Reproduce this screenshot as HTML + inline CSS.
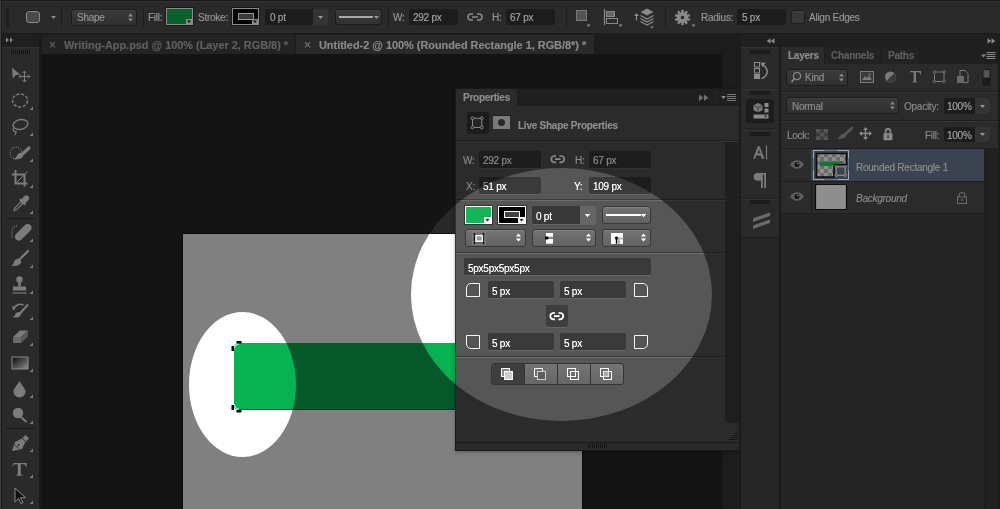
<!DOCTYPE html>
<html><head><meta charset="utf-8">
<style>
*{margin:0;padding:0;box-sizing:border-box}
html,body{width:1000px;height:509px;overflow:hidden;background:#161616;font-family:"Liberation Sans",sans-serif;font-size:11px;color:#8a8a8a}
.a{position:absolute}
.t{position:absolute;white-space:nowrap;line-height:12px;-webkit-text-stroke:0.15px currentColor}
.b{font-weight:bold}
.fld{position:absolute;background:#1d1d1d;border-radius:2px;box-shadow:0 1px 0 #333}
.dd{position:absolute;background:linear-gradient(#3a3a3a,#313131);border:1px solid #1c1c1c;border-radius:3px;box-shadow:inset 0 1px 0 #404040}
.sep{position:absolute;background:#1e1e1e}
</style></head><body>

<!-- OPTIONS BAR -->
<div class="a" style="left:0;top:0;width:1000px;height:34px;background:#2a2a2a;border-top:1px solid #1a1a1a;border-bottom:1px solid #1c1c1c"></div>
<div class="a" style="left:0;top:1px;width:1000px;height:1px;background:#303030"></div>
<div class="a" style="left:6px;top:8px;width:3px;height:19px;background:repeating-linear-gradient(#141414 0 1px,transparent 1px 2px)"></div>
<div class="a" style="left:26px;top:11px;width:14px;height:12px;border:1px solid #8a8a8a;border-radius:3px;background:#4a4a4a;box-shadow:0 -1px 0 #1a1a1a"></div>
<svg class="a" style="left:50px;top:15px" width="7" height="5"><path d="M1 1h5l-2.5 3z" fill="#8a8a8a"/></svg>
<div class="sep" style="left:61px;top:6px;width:1px;height:22px"></div>
<div class="dd" style="left:71px;top:9px;width:66px;height:17px"></div>
<div class="t" style="left:77px;top:12px;font-size:10px;letter-spacing:-0.25px;color:#969696">Shape</div>
<svg class="a" style="left:127px;top:12px" width="7" height="11"><path d="M1 4.5h5l-2.5-3zM1 6.5h5l-2.5 3z" fill="#8a8a8a"/></svg>
<div class="sep" style="left:143px;top:6px;width:1px;height:22px"></div>
<div class="t" style="left:148px;top:12px;font-size:10px;letter-spacing:-0.25px;color:#969696">Fill:</div>
<div class="a" style="left:166px;top:8px;width:27px;height:17px;background:#0a5f2a;border:1px solid #8a8a8a;box-shadow:0 0 0 1px #1a1a1a"></div>
<svg class="a" style="left:186px;top:19px" width="6" height="5"><rect width="6" height="5" fill="#8a8a8a"/><path d="M1 1.5h4l-2 2.5z" fill="#111"/></svg>
<div class="t" style="left:198px;top:12px;font-size:10px;letter-spacing:-0.25px;color:#969696">Stroke:</div>
<div class="a" style="left:232px;top:8px;width:27px;height:17px;background:#000;border:1px solid #8a8a8a;box-shadow:0 0 0 1px #1a1a1a"></div>
<div class="a" style="left:238px;top:13px;width:16px;height:7px;border:1px solid #9a9a9a;background:#3a3a3a"></div>
<svg class="a" style="left:252px;top:19px" width="6" height="5"><rect width="6" height="5" fill="#8a8a8a"/><path d="M1 1.5h4l-2 2.5z" fill="#111"/></svg>
<div class="a" style="left:265px;top:9px;width:63px;height:16px;background:#1c1c1c;border-radius:2px"></div>
<div class="a" style="left:313px;top:9px;width:15px;height:16px;background:#343434;border-radius:0 2px 2px 0"></div>
<svg class="a" style="left:317px;top:15px" width="7" height="5"><path d="M1 1h5l-2.5 3z" fill="#999"/></svg>
<div class="t" style="left:270px;top:12px;font-size:10px;letter-spacing:-0.25px;color:#a4a4a4">0 pt</div>
<div class="dd" style="left:335px;top:9px;width:47px;height:16px"></div>
<div class="a" style="left:339px;top:16px;width:34px;height:2px;background:#a8a8a8"></div>
<svg class="a" style="left:373px;top:15px" width="7" height="5"><path d="M1 1h5l-2.5 3z" fill="#999"/></svg>
<div class="sep" style="left:388px;top:6px;width:1px;height:22px"></div>
<div class="t" style="left:393px;top:12px;font-size:10px;letter-spacing:-0.25px;color:#969696">W:</div>
<div class="a" style="left:409px;top:9px;width:49px;height:16px;background:#1c1c1c;border-radius:2px"></div>
<div class="t" style="left:413px;top:12px;font-size:10px;letter-spacing:-0.25px;color:#a4a4a4">292 px</div>
<svg class="a" style="left:467px;top:12px" width="16" height="10"><path d="M6 2H4a3 3 0 0 0 0 6h2M10 2h2a3 3 0 0 1 0 6h-2M5 5h6" fill="none" stroke="#8a8a8a" stroke-width="1.6"/></svg>
<div class="t" style="left:492px;top:12px;font-size:10px;letter-spacing:-0.25px;color:#969696">H:</div>
<div class="a" style="left:506px;top:9px;width:49px;height:16px;background:#1c1c1c;border-radius:2px"></div>
<div class="t" style="left:510px;top:12px;font-size:10px;letter-spacing:-0.25px;color:#a4a4a4">67 px</div>
<div class="sep" style="left:566px;top:6px;width:1px;height:22px"></div>
<div class="a" style="left:576px;top:10px;width:11px;height:11px;border:1px solid #777;background:#555"></div>
<svg class="a" style="left:586px;top:24px" width="5" height="4"><path d="M0.5 0.5h4l-2 2.5z" fill="#8a8a8a"/></svg>
<svg class="a" style="left:603px;top:8px" width="16" height="18"><path d="M1.5 1v16" stroke="#8a8a8a" stroke-width="1.2"/><rect x="3.5" y="3.5" width="8" height="5" fill="#666" stroke="#8a8a8a"/><rect x="3.5" y="10.5" width="11" height="5" fill="#2a2a2a" stroke="#8a8a8a"/></svg>
<svg class="a" style="left:618px;top:24px" width="5" height="4"><path d="M0.5 0.5h4l-2 2.5z" fill="#8a8a8a"/></svg>
<svg class="a" style="left:633px;top:7px" width="22" height="23"><path d="M14 1.5l6.5 3.5-6.5 3.5-6.5-3.5z" fill="#8a8a8a"/><path d="M7.5 8.5l6.5 3.5 6.5-3.5M7.5 11.5l6.5 3.5 6.5-3.5M7.5 14.5l6.5 3.5 6.5-3.5" fill="none" stroke="#8a8a8a" stroke-width="1.4"/><path d="M3.5 13.5V8" stroke="#8a8a8a" stroke-width="1.2"/><path d="M1 9l2.5-3 2.5 3z" fill="#8a8a8a"/><path d="M17 19.5h4l-2 2z" fill="#8a8a8a"/></svg>
<div class="sep" style="left:665px;top:6px;width:1px;height:22px"></div>
<svg class="a" style="left:674px;top:9px" width="17" height="17"><g fill="#8a8a8a"><circle cx="8.5" cy="8.5" r="5.6"/><rect x="7.3" y="0.8" width="2.4" height="3.5" transform="rotate(0 8.5 8.5)"/><rect x="7.3" y="0.8" width="2.4" height="3.5" transform="rotate(36 8.5 8.5)"/><rect x="7.3" y="0.8" width="2.4" height="3.5" transform="rotate(72 8.5 8.5)"/><rect x="7.3" y="0.8" width="2.4" height="3.5" transform="rotate(108 8.5 8.5)"/><rect x="7.3" y="0.8" width="2.4" height="3.5" transform="rotate(144 8.5 8.5)"/><rect x="7.3" y="0.8" width="2.4" height="3.5" transform="rotate(180 8.5 8.5)"/><rect x="7.3" y="0.8" width="2.4" height="3.5" transform="rotate(216 8.5 8.5)"/><rect x="7.3" y="0.8" width="2.4" height="3.5" transform="rotate(252 8.5 8.5)"/><rect x="7.3" y="0.8" width="2.4" height="3.5" transform="rotate(288 8.5 8.5)"/><rect x="7.3" y="0.8" width="2.4" height="3.5" transform="rotate(324 8.5 8.5)"/></g><circle cx="8.5" cy="8.5" r="1.8" fill="#2a2a2a"/></svg>
<svg class="a" style="left:691px;top:24px" width="5" height="4"><path d="M0.5 0.5h4l-2 2.5z" fill="#8a8a8a"/></svg>
<div class="t" style="left:701px;top:12px;font-size:10px;letter-spacing:-0.25px;color:#969696">Radius:</div>
<div class="a" style="left:737px;top:9px;width:49px;height:16px;background:#1c1c1c;border-radius:2px"></div>
<div class="t" style="left:742px;top:12px;font-size:10px;letter-spacing:-0.25px;color:#a4a4a4">5 px</div>
<div class="a" style="left:791px;top:10px;width:14px;height:14px;background:#383838;border:1px solid #1c1c1c;border-radius:3px;box-shadow:inset 0 1px 0 #444"></div>
<div class="t" style="left:809px;top:12px;font-size:10px;letter-spacing:-0.25px;color:#969696">Align Edges</div>

<!-- TABS ROW -->
<div class="a" style="left:0;top:34px;width:1000px;height:20px;background:#1c1c1c"></div>
<div class="a" style="left:42px;top:35px;width:253px;height:19px;background:#232323"></div>
<div class="a" style="left:296px;top:35px;width:298px;height:19px;background:#292929"></div>
<div class="t" style="left:49px;top:39px;font-size:12px;color:#6a6a6a">×</div>
<div class="t b" style="left:64px;top:39px;font-size:10.9px;color:#606060">Writing-App.psd @ 100% (Layer 2, RGB/8) *</div>
<div class="t" style="left:304px;top:39px;font-size:12px;color:#7a7a7a">×</div>
<div class="t b" style="left:319px;top:39px;font-size:10.9px;color:#8a8a8a">Untitled-2 @ 100% (Rounded Rectangle 1, RGB/8*) *</div>

<!-- LEFT TOOLBAR -->
<div class="a" style="left:1px;top:34px;width:1px;height:475px;background:#1a1a1a"></div>
<div class="a" style="left:2px;top:35px;width:37px;height:12px;background:#1f1f1f"></div>
<div class="a" style="left:2px;top:47px;width:37px;height:462px;background:#2a2a2a;border-top:1px solid #333"></div>
<div class="a" style="left:39px;top:34px;width:2px;height:475px;background:#1a1a1a"></div>
<svg class="a" style="left:0;top:0" width="40" height="509">
<g fill="#8a8a8a" stroke="none">
<path d="M6 37.5l3 2.5-3 2.5zM10 37.5l3 2.5-3 2.5z"/>
</g>
<g stroke="#141414" stroke-width="1"><path d="M11.5 50v4.5M13.5 50v4.5M15.5 50v4.5M17.5 50v4.5M19.5 50v4.5M21.5 50v4.5M23.5 50v4.5M25.5 50v4.5M27.5 50v4.5M29.5 50v4.5"/></g>
<g fill="#7c7c7c" stroke="none">
<!-- tiny triangles -->
<path d="M33 106.5v3.5h-3.5zM33 132.5v3.5h-3.5zM33 158.5v3.5h-3.5zM33 184.5v3.5h-3.5zM33 210.5v3.5h-3.5zM33 238.5v3.5h-3.5zM33 264.5v3.5h-3.5zM33 290.5v3.5h-3.5zM33 316.5v3.5h-3.5zM33 342.5v3.5h-3.5zM33 368.5v3.5h-3.5zM33 394.5v3.5h-3.5zM33 420.5v3.5h-3.5zM33 448.5v3.5h-3.5zM33 474.5v3.5h-3.5zM33 500.5v3.5h-3.5z"/>
<!-- move -->
<path d="M12 67.5l8 7-4.2.4-3 3.8z"/>
</g>
<g stroke="#7c7c7c" fill="none">
<path d="M24.5 71.5v10M19.5 76.5h10" stroke-width="1.2"/>
<path d="M22.5 73l2-2 2 2M22.5 80l2 2 2-2M21 74.5l-2 2 2 2M28 74.5l2 2-2 2" stroke-width="1"/>
<!-- marquee -->
<ellipse cx="20" cy="100.5" rx="7.5" ry="6.5" stroke-width="1.5" stroke-dasharray="3.2 1.6"/>
<!-- lasso -->
<ellipse cx="20.5" cy="124.5" rx="7.5" ry="4.8" stroke-width="1.4" transform="rotate(-12 20.5 124.5)"/>
<path d="M14 128c-2 2 0 4 1.5 3.5s0 3-1 3.5" stroke-width="1.3"/>
<!-- quick select -->
<circle cx="16" cy="153" r="5.8" stroke-width="1.2" stroke-dasharray="1 1.2"/>
<path d="M29 148l-7 6.5" stroke-width="3.2" stroke-linecap="round"/>
<!-- crop -->
<path d="M15.5 170v13.5h12M12 174.5h12.5v12" stroke-width="2"/>
<path d="M15.5 183.5l12-12" stroke-width="1"/>
<!-- eyedropper -->

<!-- healing dotted -->
<path d="M17 226a5 5 0 0 0-5 6v6" stroke-width="1.3" stroke-dasharray="1 1.3"/>
<!-- brush -->
<path d="M28 251l-9 9" stroke-width="2.2" stroke-linecap="round"/>
<!-- stamp -->
<path d="M12.5 293h14" stroke-width="1.2"/>
<!-- history brush -->
<path d="M13.5 310a7 7 0 0 1 10-5" stroke-width="1.5"/>
<path d="M27.5 305l-7 8" stroke-width="2" stroke-linecap="round"/>
<!-- gradient border -->
<!-- pen -->
<!-- path select -->
</g>
<defs><linearGradient id="gr" x1="0" y1="0" x2="1" y2="1"><stop offset="0" stop-color="#0a0a0a"/><stop offset="1" stop-color="#8a8a8a"/></linearGradient></defs>
<g fill="#7c7c7c" stroke="none">
<!-- quick select brush tip -->
<path d="M23 153c-3-1-6 1-6.5 3.5-.5 1.5-2 2-3 2.5 3 .5 8 .5 9.5-2.5z"/>
<!-- crop -->
<!-- eyedropper -->
<g transform="translate(20.5 204) rotate(45)"><rect x="-2.8" y="-11" width="5.6" height="7.5" rx="2.6"/><rect x="-3.8" y="-4.2" width="7.6" height="2.4"/><rect x="-1.3" y="-1.8" width="2.6" height="9.5" fill="#3a3a3a" stroke="#7c7c7c" stroke-width="1"/><path d="M-.6 7.7h1.2v2.5h-1.2z"/></g>
<!-- healing -->
<path d="M16 234l9-9c1.5-1.5 4-1.5 5.5 0s1.5 4 0 5.5l-9 9c-1.5 1.5-4 1.5-5.5 0s-1.5-4 0-5.5z"/>
<!-- brush tip -->
<path d="M19.5 258.5c-3 0-5 1.5-5.5 3.5-.3 1.5-1.5 3-3 3.5 4 .8 9 .5 10.5-3.5z"/>
<!-- stamp -->
<circle cx="19.5" cy="279.5" r="3.2"/>
<path d="M18.2 282h2.6v4.5h-2.6z"/>
<path d="M13 286.5h13v4h-13z"/>
<!-- history brush tip -->
<path d="M19.5 312c-2.5 0-4 1-4.5 2.8-.2 1-1.2 2-2.5 2.5 3.5.6 7.5.3 8.5-2.8z"/>
<path d="M12 306l3.5 1-2.5 3z"/>
<!-- eraser -->
<path d="M13 337l7-6.5h8l-7 6.5z"/>
<path d="M13 337h8v6h-8z" fill="#6a6a6a"/>
<path d="M21 337l7-6.5v6l-7 6.5z" fill="#5a5a5a"/>
<!-- blur drop -->
<path d="M19.5 381c2 4 6 7.5 6 10.5a6 6 0 0 1-12 0c0-3 4-6.5 6-10.5z"/>
<!-- dodge -->
<circle cx="18" cy="413" r="5.2"/>
<path d="M21 417l5.5 5" stroke="#7c7c7c" stroke-width="2"/>
<!-- pen -->
<path d="M12 451l3-9 7-3.5 3.5 3.5-3.5 7z"/>
<path d="M22.5 438l3-3 3.5 3.5-3 3z"/>
<!-- T -->
<path d="M13.5 463h13.2v4h-.8c-.3-2-.8-2.8-2.5-2.8h-2.6v10.3l1.5.5v.8h-6v-.8l1.5-.5v-10.3h-2.6c-1.7 0-2.2.8-2.5 2.8h-.7z"/>
</g>
<path d="M14.5 444.5l4 4" stroke="#2a2a2a" stroke-width="1"/><circle cx="18.5" cy="445" r="1" fill="#2a2a2a"/>
<rect x="12" y="357" width="16" height="12" fill="url(#gr)" stroke="#8a8a8a" stroke-width="1"/>
<path d="M15 488v14l3.5-3.5 2.5 5 2-1-2.5-4.8h5z" fill="#0e0e0e" stroke="#8a8a8a" stroke-width="1"/>
<path d="M6 218.5h29M6 428.5h29" stroke="#1a1a1a" stroke-width="1"/>
</svg>

<!-- CANVAS DOC -->
<div class="a" style="left:41px;top:54px;width:698px;height:455px;background:#141414"></div>
<div class="a" style="left:722px;top:54px;width:17px;height:455px;background:linear-gradient(90deg,#1a1a1a,#1e1e1e 40%,#1c1c1c)"></div>
<div class="a" style="left:183px;top:234px;width:399px;height:275px;background:#808080;box-shadow:0 0 0 1px #0a0a0a"></div>
<div class="a" style="left:234px;top:343px;width:292px;height:67px;background:#045829;border-radius:5px 3px 3px 5px;box-shadow:inset 0 -1px 0 #02301a"></div>
<svg class="a" style="left:225px;top:335px" width="20" height="85">
<path d="M9.5 13.5A4.5 4.5 0 0 1 14 9" stroke="#40d888" stroke-width="1" fill="none"/>
<path d="M9.5 69.5A4.5 4.5 0 0 0 14 74" stroke="#40d888" stroke-width="1" fill="none"/>
<rect x="11.5" y="6" width="5" height="2.5" fill="#000"/>
<rect x="6.5" y="11" width="2.5" height="5" fill="#000"/>
<rect x="6.5" y="70" width="2.5" height="5" fill="#000"/>
<rect x="11.5" y="75" width="5" height="2.5" fill="#000"/>
</svg>

<!-- PROPERTIES PANEL -->
<div class="a" style="left:455px;top:88px;width:286px;height:363px;background:#2b2b2b;border:1px solid #191919;box-shadow:0 1px 4px rgba(0,0,0,.3)"></div>
<div class="a" style="left:456px;top:89px;width:284px;height:17px;background:#1f1f1f"></div>
<div class="a" style="left:456px;top:89px;width:61px;height:18px;background:#2b2b2b"></div>
<div class="t b" style="left:463px;top:92px;font-size:10px;letter-spacing:-0.25px;color:#8e8e8e">Properties</div>
<svg class="a" style="left:698px;top:91px" width="40" height="13">
<path d="M1 3.5l4.5 3.3L1 10zM6 3.5l4.5 3.3L6 10z" fill="#6e6e6e"/>
<path d="M16.5 0v12M19 0v12" stroke="#2a2a2a" stroke-width="1"/>
<path d="M23 5h5l-2.5 3z" fill="#8a8a8a"/>
<path d="M29 3.5h9M29 5.5h9M29 7.5h9M29 9.5h9" stroke="#777" stroke-width="1"/>
</svg>
<div class="a" style="left:467px;top:112px;width:22px;height:22px;background:#1c1c1c;border-radius:3px"></div>
<svg class="a" style="left:467px;top:112px" width="22" height="22"><rect x="5.5" y="6.2" width="9.3" height="9.3" fill="#242424" stroke="#8a8a8a" stroke-width="1"/><g fill="#1c1c1c" stroke="#8a8a8a" stroke-width="1"><circle cx="5.5" cy="6.2" r="1.4"/><circle cx="14.8" cy="6.2" r="1.4"/><circle cx="5.5" cy="15.5" r="1.4"/><circle cx="14.8" cy="15.5" r="1.4"/></g></svg>
<div class="a" style="left:493px;top:116px;width:17px;height:13px;background:#7a7a7a;box-shadow:0 -1px 0 #1e1e1e"></div>
<div class="a" style="left:498px;top:119px;width:7px;height:7px;border-radius:50%;background:#2a2a2a"></div>
<div class="t b" style="left:518px;top:120px;font-size:10px;letter-spacing:-0.25px;color:#8e8e8e">Live Shape Properties</div>
<div class="a" style="left:456px;top:140px;width:284px;height:1px;background:#1e1e1e"></div>
<div class="a" style="left:456px;top:141px;width:284px;height:1px;background:#353535"></div>
<div class="a" style="left:725px;top:142px;width:15px;height:281px;background:#1f1f1f"></div>

<div class="t" style="left:463px;top:155px;font-size:10px;letter-spacing:-0.25px;color:#8a8a8a">W:</div>
<div class="fld" style="left:479px;top:151px;width:62px;height:17px"></div>
<div class="t" style="left:483px;top:155px;font-size:10px;letter-spacing:-0.25px;color:#8e8e8e">292 px</div>
<svg class="a" style="left:550px;top:154px" width="16" height="11"><path d="M6 2H4.5a3.2 3.2 0 0 0 0 6.4H6M9.5 2H11a3.2 3.2 0 0 1 0 6.4H9.5M5 5.2h5.5" fill="none" stroke="#8a8a8a" stroke-width="1.7"/></svg>
<div class="t" style="left:575px;top:155px;font-size:10px;letter-spacing:-0.25px;color:#8a8a8a">H:</div>
<div class="fld" style="left:589px;top:151px;width:62px;height:17px"></div>
<div class="t" style="left:593px;top:155px;font-size:10px;letter-spacing:-0.25px;color:#8e8e8e">67 px</div>

<div class="t" style="left:466px;top:181px;font-size:10px;letter-spacing:-0.25px;color:#8a8a8a">X:</div>
<div class="fld" style="left:479px;top:177px;width:62px;height:17px"></div>
<div class="t" style="left:483px;top:181px;font-size:10px;letter-spacing:-0.25px;color:#8e8e8e">51 px</div>
<div class="t" style="left:574px;top:181px;font-size:10px;letter-spacing:-0.25px;color:#8a8a8a">Y:</div>
<div class="fld" style="left:589px;top:177px;width:62px;height:17px"></div>
<div class="t" style="left:593px;top:181px;font-size:10px;letter-spacing:-0.25px;color:#8e8e8e">109 px</div>

<div class="a" style="left:456px;top:199px;width:269px;height:1px;background:#1e1e1e"></div>
<div class="a" style="left:456px;top:200px;width:269px;height:1px;background:#353535"></div>

<div class="a" style="left:465px;top:206px;width:27px;height:18px;background:#0a5a2a;border:1px solid #8a8a8a;box-shadow:0 0 0 1px #1a1a1a"></div>
<svg class="a" style="left:484px;top:217px" width="7" height="6"><rect width="7" height="6" fill="#7a7a7a"/><path d="M1.5 2h4l-2 2.5z" fill="#111"/></svg>
<div class="a" style="left:498px;top:206px;width:28px;height:18px;background:#000;border:1px solid #8a8a8a;box-shadow:0 0 0 1px #1a1a1a"></div>
<div class="a" style="left:504px;top:211px;width:16px;height:7px;border:1px solid #8a8a8a;background:#222"></div>
<svg class="a" style="left:518px;top:217px" width="7" height="6"><rect width="7" height="6" fill="#7a7a7a"/><path d="M1.5 2h4l-2 2.5z" fill="#111"/></svg>
<div class="a" style="left:532px;top:206px;width:64px;height:18px;background:#1c1c1c;border-radius:2px;box-shadow:0 1px 0 #333"></div>
<div class="a" style="left:580px;top:206px;width:16px;height:18px;background:#333;border-radius:0 2px 2px 0"></div>
<svg class="a" style="left:584px;top:213px" width="7" height="5"><path d="M1 1h5l-2.5 3z" fill="#999"/></svg>
<div class="t" style="left:536px;top:211px;font-size:10px;letter-spacing:-0.25px;color:#8e8e8e">0 pt</div>
<div class="dd" style="left:602px;top:206px;width:49px;height:18px"></div>
<div class="a" style="left:606px;top:214px;width:35px;height:2px;background:#9a9a9a"></div>
<svg class="a" style="left:640px;top:213px" width="7" height="5"><path d="M1 1h5l-2.5 3z" fill="#999"/></svg>

<div class="dd" style="left:465px;top:229px;width:61px;height:18px"></div>

<svg class="a" style="left:515px;top:232px" width="7" height="11"><path d="M1 4.5h5l-2.5-3zM1 6.5h5l-2.5 3z" fill="#8a8a8a"/></svg>
<div class="dd" style="left:532px;top:229px;width:64px;height:18px"></div>

<svg class="a" style="left:585px;top:232px" width="7" height="11"><path d="M1 4.5h5l-2.5-3zM1 6.5h5l-2.5 3z" fill="#8a8a8a"/></svg>
<div class="dd" style="left:602px;top:229px;width:49px;height:18px"></div>
<svg class="a" style="left:464px;top:228px" width="160" height="20">
<rect x="8.5" y="3.5" width="13" height="13" fill="none" stroke="#3e3e3e" stroke-width="1"/>
<path d="M10.4 5.9v9M19.5 5.9v9" stroke="#000" stroke-width="1"/>
<rect x="12" y="7.6" width="6.4" height="5.6" fill="#4a4a4a" stroke="#808080" stroke-width="1.4"/>
<g fill="#000" stroke="#555" stroke-width=".6"><circle cx="10.4" cy="5.9" r="1.5"/><circle cx="19.5" cy="5.9" r="1.5"/><circle cx="10.4" cy="14.9" r="1.5"/><circle cx="19.5" cy="14.9" r="1.5"/></g>
<rect x="82" y="5" width="7" height="3.8" fill="#808080"/><rect x="82" y="11" width="7" height="4.7" fill="#808080"/><path d="M84 10h5" stroke="#555" stroke-width="1"/>
<rect x="81" y="8.6" width="3.2" height="2.8" fill="#000"/>
<rect x="147" y="5" width="12" height="11" fill="#808080"/><path d="M151.5 9.5h7.5v2h-3v4.5h-4.5z" fill="#5a5a5a"/>
<circle cx="152.5" cy="10" r="1.6" fill="#000"/><path d="M152.5 10v5.5" stroke="#000" stroke-width="1.1"/>
</svg>
<svg class="a" style="left:640px;top:232px" width="7" height="11"><path d="M1 4.5h5l-2.5-3zM1 6.5h5l-2.5 3z" fill="#8a8a8a"/></svg>

<div class="a" style="left:456px;top:252px;width:269px;height:1px;background:#1e1e1e"></div>
<div class="a" style="left:456px;top:253px;width:269px;height:1px;background:#353535"></div>

<div class="fld" style="left:464px;top:258px;width:187px;height:17px"></div>
<div class="t" style="left:468px;top:263px;font-size:10px;letter-spacing:-0.25px;color:#8e8e8e">5px5px5px5px</div>

<svg class="a" style="left:465px;top:282px" width="16" height="16"><path d="M1.5 14.5V6a4.5 4.5 0 0 1 4.5-4.5h8.5v13z" fill="#2a2a2a" stroke="#7a7a7a" stroke-width="1"/></svg>
<div class="fld" style="left:488px;top:281px;width:66px;height:17px"></div>
<div class="t" style="left:492px;top:286px;font-size:10px;letter-spacing:-0.25px;color:#8e8e8e">5 px</div>
<div class="fld" style="left:560px;top:281px;width:66px;height:17px"></div>
<div class="t" style="left:564px;top:286px;font-size:10px;letter-spacing:-0.25px;color:#8e8e8e">5 px</div>
<svg class="a" style="left:633px;top:282px" width="16" height="16"><path d="M1.5 1.5H10a4.5 4.5 0 0 1 4.5 4.5v8.5h-13z" fill="#2a2a2a" stroke="#7a7a7a" stroke-width="1"/></svg>

<div class="a" style="left:546px;top:305px;width:22px;height:22px;background:#1f1f1f;border-radius:2px;box-shadow:0 1px 0 #333"></div>
<svg class="a" style="left:549px;top:311px" width="16" height="11"><path d="M6 2H4.5a3.2 3.2 0 0 0 0 6.4H6M9.5 2H11a3.2 3.2 0 0 1 0 6.4H9.5M5 5.2h5.5" fill="none" stroke="#8a8a8a" stroke-width="1.7"/></svg>

<svg class="a" style="left:465px;top:334px" width="16" height="16"><path d="M1.5 1.5h13v13H6a4.5 4.5 0 0 1-4.5-4.5z" fill="#2a2a2a" stroke="#7a7a7a" stroke-width="1"/></svg>
<div class="fld" style="left:488px;top:333px;width:66px;height:17px"></div>
<div class="t" style="left:492px;top:338px;font-size:10px;letter-spacing:-0.25px;color:#8e8e8e">5 px</div>
<div class="fld" style="left:560px;top:333px;width:66px;height:17px"></div>
<div class="t" style="left:564px;top:338px;font-size:10px;letter-spacing:-0.25px;color:#8e8e8e">5 px</div>
<svg class="a" style="left:633px;top:334px" width="16" height="16"><path d="M1.5 1.5h13V10a4.5 4.5 0 0 1-4.5 4.5H1.5z" fill="#2a2a2a" stroke="#7a7a7a" stroke-width="1"/></svg>

<div class="a" style="left:456px;top:356px;width:269px;height:1px;background:#1e1e1e"></div>
<div class="a" style="left:456px;top:357px;width:269px;height:1px;background:#353535"></div>

<div class="a" style="left:491px;top:363px;width:133px;height:22px;background:linear-gradient(#3a3a3a,#333);border:1px solid #1a1a1a;border-radius:3px"></div>
<div class="a" style="left:492px;top:364px;width:32px;height:20px;background:#1f1f1f;border-radius:2px 0 0 2px"></div>
<div class="a" style="left:524px;top:364px;width:1px;height:20px;background:#1a1a1a"></div>
<div class="a" style="left:557px;top:364px;width:1px;height:20px;background:#1a1a1a"></div>
<div class="a" style="left:590px;top:364px;width:1px;height:20px;background:#1a1a1a"></div>
<svg class="a" style="left:491px;top:363px" width="132" height="22">
<g stroke="#8a8a8a" stroke-width="1" fill="none">
<rect x="10.5" y="5.5" width="8" height="8" fill="#444"/><rect x="13.5" y="8.5" width="8" height="8" fill="#666"/>
<rect x="43.5" y="5.5" width="8" height="8"/><rect x="46.5" y="8.5" width="8" height="8" fill="#2e2e2e" stroke="#666"/>
<rect x="76.5" y="5.5" width="8" height="8"/><rect x="79.5" y="8.5" width="8" height="8"/>
<rect x="109.5" y="5.5" width="8" height="8"/><rect x="112.5" y="8.5" width="8" height="8"/><rect x="112.5" y="8.5" width="5" height="5" fill="#555" stroke="none"/>
</g>
</svg>

<div class="a" style="left:456px;top:442px;width:284px;height:1px;background:#1a1a1a"></div>
<div class="a" style="left:456px;top:443px;width:284px;height:7px;background:#2a2a2a"></div>
<div class="a" style="left:588px;top:444px;width:20px;height:4px;background:repeating-linear-gradient(90deg,#141414 0 1px,transparent 1px 2px)"></div>
<svg class="a" style="left:727px;top:430px" width="12" height="11"><path d="M11 1.5h-1M11 3.5h-3M11 5.5h-5M11 7.5h-7M11 9.5h-9" stroke="#151515" stroke-width="1"/></svg>


<!-- RIGHT DOCK -->
<div class="a" style="left:739px;top:34px;width:261px;height:475px;background:#1b1b1b"></div>
<div class="a" style="left:741px;top:35px;width:259px;height:12px;background:#1f1f1f"></div>
<svg class="a" style="left:741px;top:35px" width="259" height="12">
<path d="M29.5 3.3l-3.8 2.7 3.8 2.7zM33.5 3.3l-3.8 2.7 3.8 2.7z" fill="#8a8a8a"/>
<path d="M246.5 3.3l3.8 2.7-3.8 2.7zM250.5 3.3l3.8 2.7-3.8 2.7z" fill="#8a8a8a"/>
</svg>
<div class="a" style="left:741px;top:47px;width:38px;height:462px;background:#262626"></div>
<div class="a" style="left:741px;top:47px;width:38px;height:40px;background:#2a2a2a;border-top:1px solid #333"></div>
<div class="a" style="left:741px;top:89px;width:38px;height:39px;background:#2a2a2a;border-top:1px solid #333"></div>
<div class="a" style="left:741px;top:130px;width:38px;height:67px;background:#2a2a2a;border-top:1px solid #333"></div>
<div class="a" style="left:741px;top:199px;width:38px;height:38px;background:#2a2a2a;border-top:1px solid #333"></div>
<div class="a" style="left:741px;top:237px;width:38px;height:1px;background:#1c1c1c"></div>
<div class="a" style="left:750px;top:50px;width:20px;height:4px;background:#1c1c1c"></div>
<div class="a" style="left:750px;top:91px;width:20px;height:4px;background:#1c1c1c"></div>
<div class="a" style="left:750px;top:132px;width:20px;height:4px;background:#1c1c1c"></div>
<div class="a" style="left:750px;top:200px;width:20px;height:4px;background:#1c1c1c"></div>
<div class="a" style="left:746px;top:99px;width:28px;height:24px;background:#1c1c1c;border-radius:3px"></div>
<svg class="a" style="left:741px;top:47px" width="38" height="200">
<g fill="none" stroke="#8a8a8a" stroke-width="1">
<rect x="13.5" y="15.5" width="5" height="4.5"/><rect x="13.5" y="21.5" width="5" height="4.5"/>
</g>
<rect x="13" y="27" width="6" height="5" fill="#8a8a8a"/>
<path d="M20.5 31.5c3.5-1 6.5-4.5 5.5-8.5-.5-2.2-2-3.8-3.5-4.5" fill="none" stroke="#8a8a8a" stroke-width="1.5"/>
<path d="M19.5 15.5l5.5.3-3.8 4.2z" fill="#8a8a8a"/>
<!-- properties icon -->
<path d="M17 56l4.5 2.3v5l-4.5 2.3-4.5-2.3v-5z" fill="#7a7a7a"/>
<path d="M12.5 58.3l4.5 2.3 4.5-2.3M17 60.6v5" stroke="#3a3a3a" stroke-width=".9" fill="none"/>
<rect x="23.5" y="56" width="4" height="4" fill="#8a8a8a"/><rect x="23.5" y="61.5" width="4" height="4" fill="#8a8a8a"/>
<rect x="12.5" y="67.5" width="15" height="4" fill="#8a8a8a"/><path d="M23 68.5h3.2l-1.6 2z" fill="#222"/>
<!-- A| -->
<path d="M12.5 111.5l4.5-12h1.5l4.5 12h-2l-1.2-3.3h-4.6l-1.2 3.3zM16.3 106.5h3.4l-1.7-5z" fill="#7a7a7a" stroke="#7a7a7a" stroke-width=".5"/>
<path d="M25.5 98.5v14" stroke="#7a7a7a" stroke-width="1.2"/>
<!-- pilcrow -->
<path d="M16.5 126h8.5v15h-1.8v-13.3h-1.4v13.3h-1.8v-7.3h-3.5a3.85 3.85 0 0 1 0-7.7z" fill="#7a7a7a"/>
<!-- // -->
<path d="M12 171.5l17-6v3.5l-17 6zM12 178.5l17-6v3.5l-17 6z" fill="#6a6a6a"/>
</svg>
<div class="a" style="left:779px;top:47px;width:2px;height:462px;background:#1a1a1a"></div>

<!-- LAYERS PANEL -->
<div class="a" style="left:781px;top:47px;width:217px;height:462px;background:#282828"></div>
<div class="a" style="left:781px;top:47px;width:217px;height:17px;background:#1f1f1f"></div>
<div class="a" style="left:781px;top:47px;width:43px;height:18px;background:#2b2b2b"></div>
<div class="a" style="left:825px;top:47px;width:55px;height:17px;background:#232323"></div>
<div class="a" style="left:881px;top:47px;width:38px;height:17px;background:#232323"></div>
<div class="t b" style="left:788px;top:50px;font-size:10px;letter-spacing:-0.25px;color:#8e8e8e">Layers</div>
<div class="t b" style="left:831px;top:50px;font-size:10px;letter-spacing:-0.25px;color:#5e5e5e">Channels</div>
<div class="t b" style="left:888px;top:50px;font-size:10px;letter-spacing:-0.25px;color:#5e5e5e">Paths</div>
<svg class="a" style="left:980px;top:50px" width="16" height="12"><path d="M1 4.5h5l-2.5 3z" fill="#8a8a8a"/><path d="M6.5 2.5h9M6.5 4.5h9M6.5 6.5h9M6.5 8.5h9" stroke="#8a8a8a" stroke-width="1"/></svg>
<div class="a" style="left:781px;top:64px;width:217px;height:445px;background:#2b2b2b"></div>

<div class="dd" style="left:786px;top:69px;width:62px;height:17px"></div>
<svg class="a" style="left:790px;top:71px" width="12" height="13"><circle cx="7" cy="5" r="3.6" fill="none" stroke="#8a8a8a" stroke-width="1.3"/><path d="M4.5 7.5L1.5 11" stroke="#8a8a8a" stroke-width="1.8"/></svg>
<div class="t" style="left:805px;top:72px;font-size:10px;letter-spacing:-0.25px;color:#8e8e8e">Kind</div>
<svg class="a" style="left:838px;top:72px" width="7" height="11"><path d="M1 4.5h5l-2.5-3zM1 6.5h5l-2.5 3z" fill="#8a8a8a"/></svg>
<svg class="a" style="left:855px;top:67px" width="140" height="22">
<rect x="5.5" y="4.5" width="13" height="11" fill="#3a3a3a" stroke="#7a7a7a"/><path d="M7 13l3-4 2 2 2-2.5 3 4.5z" fill="#7a7a7a"/><circle cx="14.5" cy="7.5" r="1" fill="#7a7a7a"/>
<circle cx="35.5" cy="10" r="5.5" fill="#7a7a7a"/><path d="M39.5 6a5.5 5.5 0 0 1-7.8 7.8z" fill="#3a3a3a"/>
<path d="M55 4h11v3.5h-.8c-.2-1.6-.6-2.2-2-2.2h-2.2v9.2l1.3.4v.6h-5v-.6l1.3-.4V5.3h-2.2c-1.4 0-1.8.6-2 2.2H55z" fill="#7a7a7a"/>
<rect x="79.5" y="5" width="9.5" height="9.5" fill="none" stroke="#7a7a7a"/><g fill="#2b2b2b" stroke="#7a7a7a" stroke-width=".9"><circle cx="79.5" cy="5" r="1.3"/><circle cx="89" cy="5" r="1.3"/><circle cx="79.5" cy="14.5" r="1.3"/><circle cx="89" cy="14.5" r="1.3"/></g>
<path d="M105 3.5h5l3 3v9h-8z" fill="none" stroke="#7a7a7a"/><rect x="102" y="9" width="7" height="7" fill="#6a6a6a"/>
<rect x="127.5" y="2" width="8" height="17" fill="#1c1c1c" rx="1"/><rect x="128.5" y="3" width="6" height="7.5" fill="#555"/>
</svg>
<div class="a" style="left:781px;top:91px;width:217px;height:1px;background:#1e1e1e"></div>
<div class="a" style="left:781px;top:92px;width:217px;height:1px;background:#353535"></div>

<div class="dd" style="left:786px;top:97px;width:113px;height:17px"></div>
<div class="t" style="left:792px;top:101px;font-size:10px;letter-spacing:-0.25px;color:#8e8e8e">Normal</div>
<svg class="a" style="left:889px;top:100px" width="7" height="11"><path d="M1 4.5h5l-2.5-3zM1 6.5h5l-2.5 3z" fill="#8a8a8a"/></svg>
<div class="t" style="left:904px;top:101px;font-size:10px;letter-spacing:-0.25px;color:#8a8a8a">Opacity:</div>
<div class="a" style="left:944px;top:98px;width:46px;height:16px;background:#1c1c1c;border-radius:2px"></div>
<div class="a" style="left:975px;top:98px;width:15px;height:16px;background:#343434;border-radius:0 2px 2px 0"></div>
<svg class="a" style="left:979px;top:104px" width="7" height="5"><path d="M1 1h5l-2.5 3z" fill="#999"/></svg>
<div class="t" style="left:947px;top:101px;font-size:10px;letter-spacing:-0.25px;color:#a4a4a4">100%</div>
<div class="a" style="left:781px;top:120px;width:217px;height:1px;background:#1e1e1e"></div>
<div class="a" style="left:781px;top:121px;width:217px;height:1px;background:#353535"></div>

<div class="t" style="left:787px;top:130px;font-size:10px;letter-spacing:-0.25px;color:#8a8a8a">Lock:</div>
<svg class="a" style="left:812px;top:124px" width="90" height="22">
<rect x="4" y="5" width="12" height="11" fill="#3c3c3c"/><g fill="#555"><rect x="4" y="5" width="4" height="3.7"/><rect x="12" y="5" width="4" height="3.7"/><rect x="8" y="8.7" width="4" height="3.7"/><rect x="4" y="12.4" width="4" height="3.6"/><rect x="12" y="12.4" width="4" height="3.6"/></g>
<path d="M40 4l-7.5 7" stroke="#555" stroke-width="2.6" stroke-linecap="round"/><path d="M33.5 10c-2.5-1-5 .5-5.8 2.3-.6 1.2-1.8 2-3.2 2.4 3.5.6 7.8.3 9.4-2.2z" fill="#555"/>
<path d="M53.5 5.5v8M49.5 9.5h8" stroke="#8a8a8a" stroke-width="1.4"/><path d="M51 6l2.5-3 2.5 3zM51 13l2.5 3 2.5-3zM50 7l-3 2.5 3 2.5zM57 7l3 2.5-3 2.5z" fill="#8a8a8a"/>
<path d="M73.6 9.5V7.3a2.4 2.4 0 0 1 4.8 0v2.2" fill="none" stroke="#8a8a8a" stroke-width="1.7"/><rect x="71.5" y="9.3" width="9" height="6.9" rx="1" fill="#8a8a8a"/><rect x="75.4" y="11.3" width="1.3" height="2.8" fill="#2b2b2b"/>
</svg>
<div class="t" style="left:925px;top:130px;font-size:10px;letter-spacing:-0.25px;color:#8a8a8a">Fill:</div>
<div class="a" style="left:944px;top:127px;width:46px;height:15px;background:#1c1c1c;border-radius:2px"></div>
<div class="a" style="left:975px;top:127px;width:15px;height:15px;background:#343434;border-radius:0 2px 2px 0"></div>
<svg class="a" style="left:979px;top:132px" width="7" height="5"><path d="M1 1h5l-2.5 3z" fill="#999"/></svg>
<div class="t" style="left:947px;top:130px;font-size:10px;letter-spacing:-0.25px;color:#a4a4a4">100%</div>
<div class="a" style="left:781px;top:148px;width:217px;height:1px;background:#1e1e1e"></div>

<div class="a" style="left:984px;top:149px;width:15px;height:360px;background:linear-gradient(90deg,#1e1e1e,#222 30%,#212121)"></div>
<div class="a" style="left:781px;top:149px;width:30px;height:32px;background:#2b2b2b"></div>
<div class="a" style="left:811px;top:149px;width:173px;height:32px;background:#3b4350"></div>
<div class="a" style="left:781px;top:181px;width:203px;height:1px;background:#1e1e1e"></div>
<div class="a" style="left:781px;top:182px;width:203px;height:31px;background:#2b2b2b"></div>
<div class="a" style="left:811px;top:182px;width:1px;height:31px;background:#1e1e1e"></div>
<div class="a" style="left:781px;top:213px;width:203px;height:1px;background:#1e1e1e"></div>
<div class="a" style="left:781px;top:214px;width:203px;height:295px;background:#252525"></div>
<svg class="a" style="left:788px;top:158px" width="18" height="50">
<path d="M2 6.5c2-2.8 4.3-4.2 7-4.2s5 1.4 7 4.2c-2 2.8-4.3 4.2-7 4.2S4 9.3 2 6.5z" fill="#5e5e5e"/><circle cx="9" cy="6.5" r="2.5" fill="#161616"/><circle cx="9.8" cy="5.6" r=".7" fill="#bbb"/>
<path d="M2 38.5c2-2.8 4.3-4.2 7-4.2s5 1.4 7 4.2c-2 2.8-4.3 4.2-7 4.2S4 41.3 2 38.5z" fill="#5e5e5e"/><circle cx="9" cy="38.5" r="2.5" fill="#161616"/><circle cx="9.8" cy="37.6" r=".7" fill="#bbb"/>
</svg>
<svg class="a" style="left:812px;top:149px" width="40" height="64">
<defs><pattern id="ck" width="8" height="8" patternUnits="userSpaceOnUse" x="4" y="4"><rect width="8" height="8" fill="#8e8e8e"/><rect width="4" height="4" fill="#6c6c6c"/><rect x="4" y="4" width="4" height="4" fill="#6c6c6c"/></pattern></defs>
<rect x="1.5" y="1.5" width="35" height="29" fill="none" stroke="#66768a" stroke-width="1"/>
<path d="M1.5 9V1.5H12M26 1.5h10.5V9M36.5 22v8.5H26M12 30.5H1.5V22" fill="none" stroke="#9aaabe" stroke-width="1"/>
<path d="M4.5 4.5h30v11h-12.5v12.5h-17.5z" fill="url(#ck)" stroke="#0c0c0c" stroke-width="1.6"/>
<rect x="8" y="12.5" width="14" height="4.5" fill="#0b7a30"/><rect x="22" y="12.5" width="8.5" height="2.5" fill="#0b7a30"/>
<rect x="24.2" y="17.8" width="9" height="8.5" fill="none" stroke="#9a9a9a" stroke-width="1"/>
<g fill="#3b4350" stroke="#9a9a9a" stroke-width=".8"><circle cx="24.2" cy="17.8" r="1.2"/><circle cx="33.2" cy="17.8" r="1.2"/><circle cx="24.2" cy="26.3" r="1.2"/><circle cx="33.2" cy="26.3" r="1.2"/></g>
<rect x="3.5" y="35.5" width="31" height="25" rx="1" fill="#8e8e8e" stroke="#0c0c0c" stroke-width="1.2"/>
</svg>
<div class="t" style="left:856px;top:162px;font-size:10px;letter-spacing:-0.25px;color:#8e8e8e">Rounded Rectangle 1</div>
<div class="t" style="left:856px;top:193px;font-size:10px;letter-spacing:-0.25px;font-style:italic;color:#8a8a8a">Background</div>
<svg class="a" style="left:956px;top:191px" width="12" height="13"><path d="M3 6V4.5a3 3 0 0 1 6 0V6" fill="none" stroke="#6a6a6a" stroke-width="1.2"/><rect x="1.5" y="6" width="9" height="6.5" fill="none" stroke="#6a6a6a"/><rect x="5.3" y="8" width="1.4" height="2" fill="#6a6a6a"/></svg>


<div class="a" style="left:0;top:0;width:1px;height:509px;background:#3e3e3e"></div>
<div class="a" style="left:1px;top:1px;width:1px;height:33px;background:#1c1c1c"></div>
<!-- HIGHLIGHT ELLIPSES -->
<div class="a" style="left:189px;top:312px;width:107px;height:145px;border-radius:50%;background:#808080;mix-blend-mode:color-dodge"></div>
<div class="a" style="left:411px;top:168px;width:301px;height:253px;border-radius:50%;background:#808080;mix-blend-mode:color-dodge"></div>

</body></html>
